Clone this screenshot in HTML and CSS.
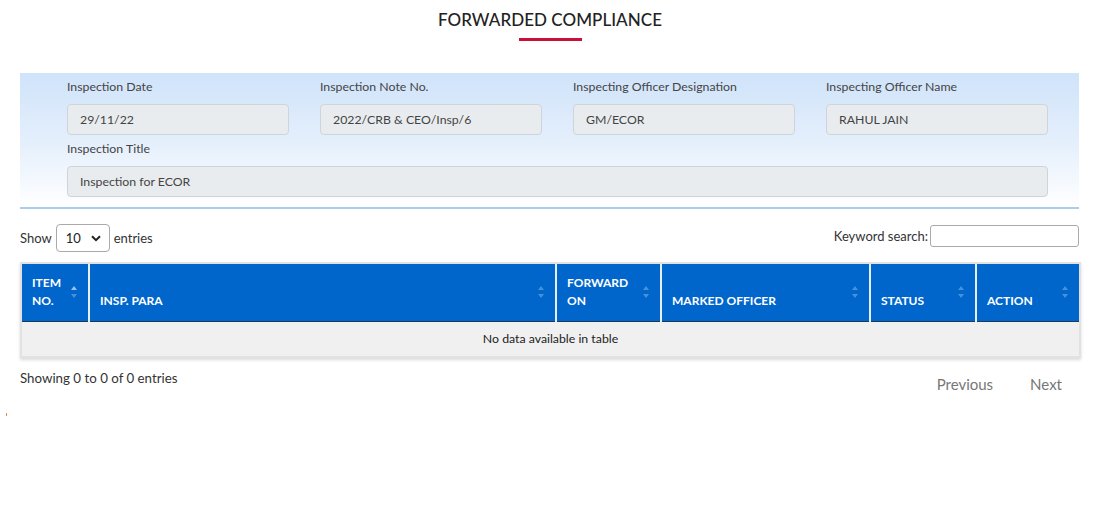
FILE: index.html
```html
<!DOCTYPE html>
<html>
<head>
<meta charset="utf-8">
<link rel="stylesheet" href="styles.css">
</head>
<body>
<div class="page">
  <div class="heading">
    <h1 class="title">FORWARDED COMPLIANCE</h1>
    <div class="title-bar"></div>
  </div>

  <div class="panel">
    <div class="grid">
      <div class="field">
        <label class="lbl">Inspection Date</label>
        <div class="inp">29/11/22</div>
      </div>
      <div class="field">
        <label class="lbl">Inspection Note No.</label>
        <div class="inp">2022/CRB &amp; CEO/Insp/6</div>
      </div>
      <div class="field">
        <label class="lbl">Inspecting Officer Designation</label>
        <div class="inp">GM/ECOR</div>
      </div>
      <div class="field">
        <label class="lbl">Inspecting Officer Name</label>
        <div class="inp">RAHUL JAIN</div>
      </div>
      <div class="field wide">
        <label class="lbl">Inspection Title</label>
        <div class="inp">Inspection for ECOR</div>
      </div>
    </div>
  </div>

  <div class="controls">
    <div class="length">Show
      <div class="select"><span>10</span>
        <svg class="chev" width="10" height="7" viewBox="0 0 10 7"><path d="M1 1.2 L5 5.2 L9 1.2" fill="none" stroke="#222" stroke-width="2"/></svg>
      </div>
      entries</div>
    <div class="search">Keyword search: <div class="search-box"></div></div>
  </div>

  <div class="table-wrap">
    <table class="tbl">
      <thead>
        <tr>
          <th class="c1"><span class="th-text">ITEM<br>NO.</span><span class="sort asc"></span></th>
          <th class="c2"><span class="th-text">INSP. PARA</span><span class="sort"></span></th>
          <th class="c3"><span class="th-text">FORWARD<br>ON</span><span class="sort"></span></th>
          <th class="c4"><span class="th-text">MARKED OFFICER</span><span class="sort"></span></th>
          <th class="c5"><span class="th-text">STATUS</span><span class="sort"></span></th>
          <th class="c6"><span class="th-text">ACTION</span><span class="sort"></span></th>
        </tr>
      </thead>
      <tbody>
        <tr><td colspan="6" class="empty">No data available in table</td></tr>
      </tbody>
    </table>
  </div>

  <div class="footer">
    <div class="info">Showing 0 to 0 of 0 entries</div>
    <div class="paging">
      <span class="pg">Previous</span>
      <span class="pg">Next</span>
    </div>
  </div>
  <div class="dot"></div>
</div>
</body>
</html>
```

FILE: styles.css
```css
* { box-sizing: border-box; }
html, body { margin: 0; padding: 0; background: #fff; }
body {
  font-family: "Lato", "Open Sans", sans-serif;
  font-size: 13px;
  color: #333;
}
.page { padding: 0 15px 0 20px; }

.heading { display: flex; flex-direction: column; align-items: center; padding-top: 9px; }
.title {
  margin: 0;
  font-size: 17px;
  font-weight: 500;
  color: #222;
  line-height: 22px;
  letter-spacing: 0.05px;
}
.title-bar { width: 63px; height: 3px; background: #c8103a; margin-top: 7px; }

.panel {
  margin-top: 32px;
  width: 1059px;
  background: linear-gradient(to bottom, #cfe3fa 0%, #e6f0fc 55%, #ffffff 100%);
  border-bottom: 2px solid #a9cdea;
  padding: 5px 32px 10px 47px;
}
.grid {
  display: grid;
  grid-template-columns: repeat(4, 222px);
  column-gap: 31px;
}
.field { display: flex; flex-direction: column; }
.field.wide { grid-column: 1 / -1; }
.lbl { font-size: 12.3px; color: #444; line-height: 18px; margin-bottom: 8px; }
.field.wide .lbl { margin-top: 5px; }
.inp {
  height: 31px;
  background: #e9ecef;
  border: 1px solid #ced4da;
  border-radius: 4px;
  padding: 0 12px;
  font-size: 12.3px;
  color: #444;
  display: flex;
  align-items: center;
}

.controls {
  display: flex;
  justify-content: space-between;
  align-items: center;
  width: 1059px;
  margin-top: 15px;
  font-size: 13px;
  color: #333;
}
.length { display: flex; align-items: center; gap: 4px; }
.select {
  width: 54px;
  height: 28px;
  border: 1px solid #aaa;
  border-radius: 4px;
  display: flex;
  align-items: center;
  justify-content: space-between;
  padding: 0 8px 0 9px;
  color: #222;
}
.search { display: flex; align-items: center; gap: 2px; margin-top: -5px; }
.search-box { width: 149px; height: 22px; border: 1px solid #aaa; border-radius: 3px; }

.table-wrap {
  margin-top: 10px;
  width: 1061px;
  border: 2px solid #e2e2e2;
  box-shadow: 0 2px 3px rgba(0,0,0,0.15);
}
.tbl { width: 1057px; border-collapse: collapse; table-layout: fixed; }
.tbl th {
  background: #0066cc;
  color: #fff;
  font-size: 12px;
  font-weight: 700;
  text-align: left;
  vertical-align: bottom;
  line-height: 18px;
  height: 57px;
  padding: 0 10px 11px 10px;
  position: relative;
  border-left: 2px solid #e8eef5;
  border-bottom: 1px solid #1a3a5c;
}
.tbl th.c1 { border-left: none; width: 67px; }
.tbl th.c2 { width: 467px; }
.tbl th.c3 { width: 105px; }
.tbl th.c4 { width: 209px; }
.tbl th.c5 { width: 106px; }
.tbl th.c6 { width: 103px; }
.sort {
  position: absolute;
  right: 10px;
  top: 22px;
  width: 7px;
  height: 14px;
}
.sort::before, .sort::after {
  content: "";
  position: absolute;
  left: 0;
  border-left: 3.5px solid transparent;
  border-right: 3.5px solid transparent;
}
.sort::before { top: 0; border-bottom: 4px solid rgba(255,255,255,0.28); }
.sort::after { top: 8px; border-top: 4px solid rgba(255,255,255,0.28); }
.sort.asc::before { border-bottom-color: rgba(255,255,255,0.6); }
.empty {
  background: #f0f0f0;
  text-align: center;
  font-size: 12.3px;
  color: #222;
  height: 35px;
  padding: 0;
}

.footer {
  display: flex;
  justify-content: space-between;
  align-items: flex-start;
  width: 1059px;
  margin-top: 12px;
}
.info { font-size: 13.3px; color: #333; }
.paging { display: flex; gap: 37px; margin-top: 5px; margin-right: 17px; }
.pg { font-size: 15px; color: #777; }
.dot { width: 1px; height: 3px; background: #d98a3a; margin: 20px 0 0 -14px; }
```
